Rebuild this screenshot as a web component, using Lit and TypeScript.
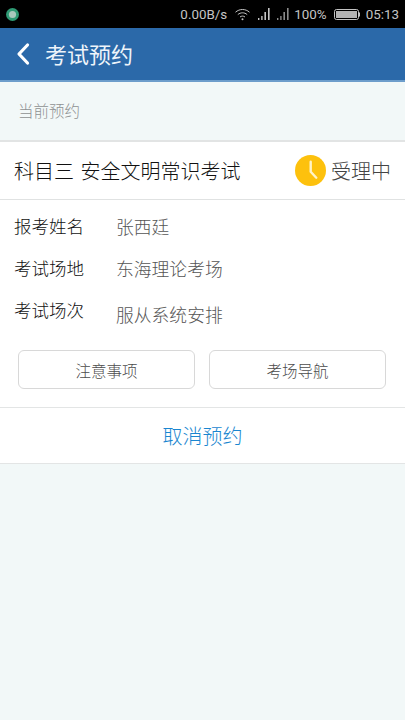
import { LitElement, html, css } from "lit";
import { customElement } from "lit/decorators.js";

@customElement("app-root")
export class AppRoot extends LitElement {
  static styles = css`
    :host {
      display: block;
      width: 405px;
      height: 720px;
      overflow: hidden;
      background: #f2f8f8;
      font-family: "Noto Sans CJK SC", "Roboto", sans-serif;
    }
    .status {
      height: 28px;
      background: #000;
      display: flex;
      align-items: center;
      padding: 0 6px 0 6px;
      color: #c4c4c4;
      font: 13.4px Roboto, sans-serif;
      box-sizing: border-box;
    }
    .dot { width: 13px; height: 13px; }
    .status-right { margin-left: auto; display: flex; align-items: center; }
    .status-right svg { display: block; }
    .speed { margin-right: 8px; }
    .wifi { margin-right: 8px; }
    .sig1 { margin-right: 7px; }
    .sig2 { margin-right: 5px; }
    .batt { margin: 0 6px 0 7px; }
    .header {
      height: 54px;
      box-sizing: border-box;
      background: #2b69a9;
      border-bottom: 2px solid #6d9dcb;
      display: flex;
      align-items: center;
      padding-left: 16px;
      color: #eef4fa;
      font-size: 22px;
    }
    .back { width: 14px; height: 24px; margin-right: 15px; }
    .header span { margin-top: -2px; }
    .section-label {
      height: 58px;
      box-sizing: border-box;
      padding: 0 0 2px 18px;
      display: flex;
      align-items: center;
      font-size: 15.5px;
      font-weight: 300;
      color: #8e9192;
    }
    .card {
      background: #fff;
      border-top: 2px solid #e2e4e4;
      border-bottom: 1px solid #e3e5e5;
    }
    .title-row {
      height: 58px;
      box-sizing: border-box;
      border-bottom: 1px solid #e0e2e2;
      display: flex;
      align-items: center;
      padding: 0 14px;
      font-size: 20px;
      font-weight: 300;
      color: #111;
      word-spacing: 2px;
    }
    .state {
      margin-left: auto;
      display: flex;
      align-items: center;
      gap: 5px;
      color: #444;
    }
    .clock { width: 31px; height: 31px; display: block; }
    .rows { padding: 5px 14px 0; }
    .row {
      display: flex;
      height: 42px;
      align-items: center;
      font-size: 17.5px;
      font-weight: 300;
      line-height: 24px;
    }
    .row.last { height: 46px; align-items: flex-start; padding-top: 9px; box-sizing: border-box; }
    .label { width: 102px; color: #111; }
    .value { color: #555; font-size: 17.8px; }
    .last .value { margin-top: 4px; }
    .actions {
      display: flex;
      gap: 14px;
      padding: 15px 19px 18px 18px;
      border-bottom: 1px solid #e3e5e5;
    }
    .btn {
      flex: 1;
      height: 39px;
      box-sizing: border-box;
      border: 1px solid #d8d8d8;
      border-radius: 6px;
      background: #fff;
      display: flex;
      align-items: center;
      justify-content: center;
      font-size: 15.5px;
      font-weight: 300;
      color: #4c4c4c;
    }
    .cancel {
      height: 55px;
      display: flex;
      align-items: center;
      justify-content: center;
      font-size: 20px;
      font-weight: 300;
      color: #1a86d0;
    }
  `;

  render() {
    return html`
      <div class="status">
        <svg class="dot" viewBox="0 0 13 13">
          <circle cx="6.5" cy="6.5" r="6.5" fill="#2f9a74" />
          <circle cx="6.5" cy="6.5" r="3.6" fill="#a9c9bd" />
        </svg>
        <div class="status-right">
          <span class="speed">0.00B/s</span>
          <svg class="wifi" width="15" height="13" viewBox="0 0 15 13" fill="none" stroke="#c4c4c4" stroke-width="1">
            <path d="M.5 4.2C4.5.6 10.5.6 14.5 4.2" />
            <path d="M2.8 6.6C5.6 4.2 9.4 4.2 12.2 6.6" />
            <path d="M5 9C6.4 7.8 8.6 7.8 10 9" />
            <circle cx="7.5" cy="11.2" r="1" fill="#c4c4c4" stroke="none" />
          </svg>
          <svg class="sig1" width="12" height="14" viewBox="0 0 12 14" fill="#c4c4c4">
            <rect x="0" y="11" width="1.4" height="2" />
            <rect x="3.2" y="9" width="1.4" height="4" />
            <rect x="6.4" y="5" width="1.6" height="8" />
            <rect x="10" y="1" width="1.6" height="12" />
          </svg>
          <svg class="sig2" width="12" height="14" viewBox="0 0 12 14" fill="#8a8a8a">
            <rect x="0" y="11" width="1.4" height="2" />
            <rect x="3.2" y="9" width="1.4" height="4" />
            <rect x="6.4" y="5" width="1.6" height="8" />
            <rect x="10" y="1" width="1.6" height="12" />
          </svg>
          <span>100%</span>
          <svg class="batt" width="26" height="11" viewBox="0 0 26 11">
            <rect x=".5" y=".5" width="24" height="10" rx="2" fill="none" stroke="#c4c4c4" />
            <rect x="2" y="2" width="21" height="7" fill="#b4b4b4" />
            <rect x="25" y="3.5" width="1" height="4" fill="#c4c4c4" />
          </svg>
          <span>05:13</span>
        </div>
      </div>
      <div class="header">
        <svg class="back" viewBox="0 0 14 24" fill="none" stroke="#fff" stroke-width="3.2" stroke-linecap="round" stroke-linejoin="round">
          <path d="M11.5 3 3 12l8.5 9" />
        </svg>
        <span>考试预约</span>
      </div>
      <div class="section-label">当前预约</div>
      <div class="card">
        <div class="title-row">
          <span>科目三 安全文明常识考试</span>
          <div class="state">
            <svg class="clock" viewBox="0 0 31 31">
              <circle cx="15.5" cy="15.5" r="15.5" fill="#fdc10d" />
              <path d="M15.7 6.7v10l5.6 6" fill="none" stroke="#fff3c8" stroke-width="2.4" stroke-linecap="round" stroke-linejoin="round" />
            </svg>
            <span>受理中</span>
          </div>
        </div>
        <div class="rows">
          <div class="row"><span class="label">报考姓名</span><span class="value">张西廷</span></div>
          <div class="row"><span class="label">考试场地</span><span class="value">东海理论考场</span></div>
          <div class="row last"><span class="label">考试场次</span><span class="value">服从系统安排</span></div>
        </div>
        <div class="actions">
          <div class="btn">注意事项</div>
          <div class="btn">考场导航</div>
        </div>
        <div class="cancel">取消预约</div>
      </div>
    `;
  }
}
